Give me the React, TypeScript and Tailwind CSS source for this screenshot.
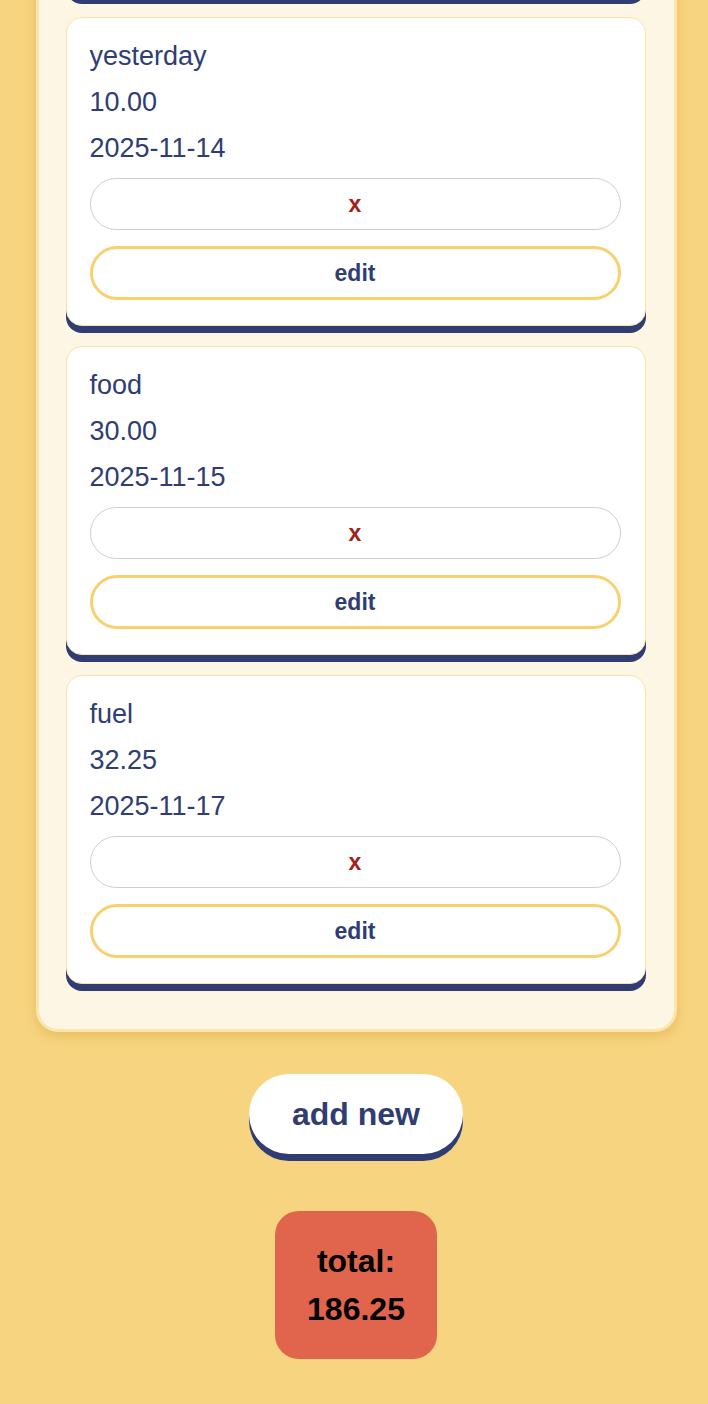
type Expense = { id: number; name: string; amount: number; date: string }

// list is scrolled down: the first entry sits above the fold, only its shadow shows
const hiddenAbove: Expense = { id: 1, name: 'rent', amount: 114, date: '2025-11-13' }
const expenses: Expense[] = [
  { id: 2, name: 'yesterday', amount: 10, date: '2025-11-14' },
  { id: 3, name: 'food', amount: 30, date: '2025-11-15' },
  { id: 4, name: 'fuel', amount: 32.25, date: '2025-11-17' },
]

const cardCls = 'mb-5 rounded-[16px] border border-[#fbe3a6] bg-white pl-[23px] pr-6 pt-[15px] pb-[25px] shadow-[0_7px_0_#2f3d72]'

function ExpenseCard({ e }: { e: Expense }) {
  return (
    <div className={cardCls}>
      <div className="flex h-[46px] items-center text-[27px]">{e.name}</div>
      <div className="flex h-[46px] items-center text-[27px]">{e.amount.toFixed(2)}</div>
      <div className="flex h-[46px] items-center text-[27px]">{e.date}</div>
      <button className="mt-[7px] flex h-[52px] w-full items-center justify-center rounded-full border border-[#cfcfcf] bg-white text-[23px] font-bold text-[#a3211a]">
        x
      </button>
      <button className="mt-4 flex h-[54px] w-full items-center justify-center rounded-full border-[3px] border-[#f8d16f] bg-white text-[23px] font-bold text-[#2f3d72]">
        edit
      </button>
    </div>
  )
}

export default function App() {
  const total = [hiddenAbove, ...expenses].reduce((s, e) => s + e.amount, 0)
  return (
    <div className="min-h-screen overflow-hidden bg-[#f7d47f] pb-[45px] pl-[4px] font-['Liberation_Sans',Arial,sans-serif] text-[#2f3d72]">
      <div className="mx-auto mt-[-345px] w-[641px] rounded-[22px] border-[3px] border-[#fbe5ad] bg-[#fdf6e5] pl-[27px] pr-[28px] pt-[30px] pb-[25px] shadow-[0_4px_12px_rgba(200,150,40,0.35)]">
        <div className={cardCls + ' h-[309px]'} aria-hidden />
        {expenses.map(e => <ExpenseCard key={e.id} e={e} />)}
      </div>

      <div className="mt-[42px] flex justify-center">
        <button className="h-[80px] w-[214px] rounded-full bg-white text-[32px] font-bold text-[#2f3d72] shadow-[0_7px_0_#2f3d72]">
          add new
        </button>
      </div>

      <div className="mt-[57px] flex justify-center">
        <div className="rounded-[24px] bg-[#e0654c] px-[32px] py-[26px] text-center text-[32px] leading-[48px] font-bold text-black">
          <div>total:</div>
          <div>{total.toFixed(2)}</div>
        </div>
      </div>
    </div>
  )
}
